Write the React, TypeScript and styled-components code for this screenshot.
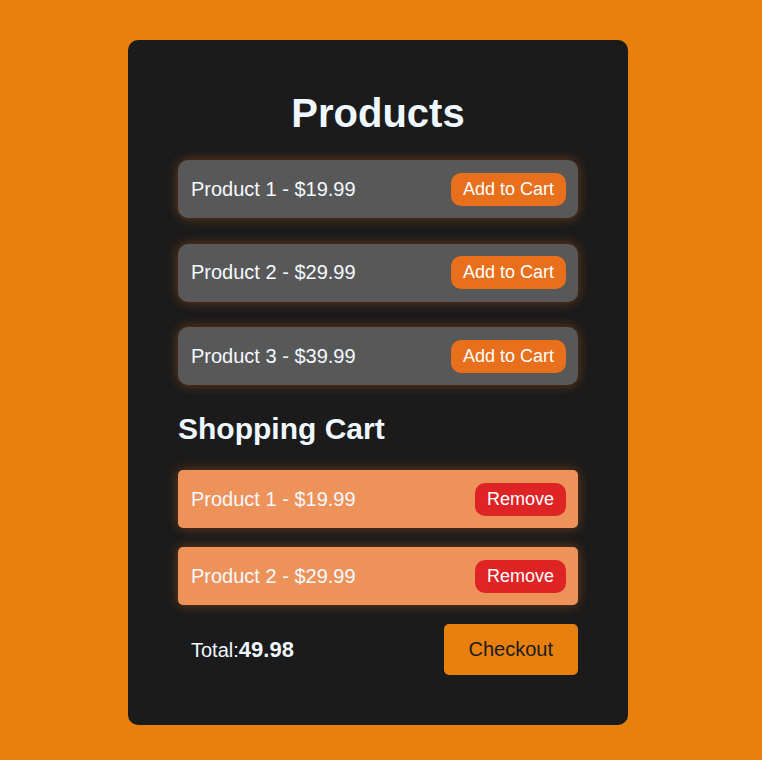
import React from "react";
import styled, { createGlobalStyle } from "styled-components";

const Global = createGlobalStyle`
  html, body { margin: 0; padding: 0; background: #e8800e; }
  body { font-family: "Liberation Sans", Arial, sans-serif; }
`;

const Page = styled.div`
  display: flex;
  justify-content: center;
  align-items: flex-start;
  padding: 40px 6px 35px 0;
  min-height: 760px;
  box-sizing: border-box;
`;

const Card = styled.div`
  width: 500px;
  box-sizing: border-box;
  background: #1b1b1b;
  border-radius: 10px;
  padding: 50px 50px 50px 50px;
  color: #f0f8ff;
`;

const Title = styled.h1`
  margin: 0 0 24px;
  text-align: center;
  font-size: 40px;
  line-height: 46px;
  font-weight: bold;
`;

const List = styled.div<{ $gap: number }>`
  display: flex;
  flex-direction: column;
  gap: ${(p) => p.$gap}px;
`;

const Row = styled.div<{ $variant: "product" | "cart" }>`
  display: flex;
  align-items: center;
  justify-content: space-between;
  height: 58px;
  box-sizing: border-box;
  padding: 0 12px 0 13px;
  border-radius: ${(p) => (p.$variant === "product" ? 10 : 5)}px;
  background: ${(p) => (p.$variant === "product" ? "#585858" : "#ed935a")};
  box-shadow: 0 0 12px rgba(232, 111, 28, 0.4);
  font-size: 20px;
`;

const Label = styled.span`
  color: #f5f8ff;
`;

const SmallButton = styled.button<{ $tone: "add" | "remove" }>`
  font-family: "Liberation Sans", Arial, sans-serif;
  font-size: 18px;
  line-height: 21px;
  padding: 6px 12px;
  border: none;
  border-radius: 10px;
  color: #fff;
  background: ${(p) => (p.$tone === "add" ? "#e86f1c" : "#df2426")};
  cursor: pointer;
`;

const Subtitle = styled.h2`
  margin: 26px 0 24px;
  font-size: 30px;
  line-height: 35px;
  font-weight: bold;
`;

const Footer = styled.div`
  display: flex;
  align-items: center;
  justify-content: space-between;
  margin-top: 19px;
  padding-left: 13px;
`;

const Total = styled.span`
  font-size: 20px;
  b {
    font-size: 22px;
  }
`;

const Checkout = styled.button`
  font-family: "Liberation Sans", Arial, sans-serif;
  font-size: 20px;
  line-height: 23px;
  padding: 14px 25px;
  border: none;
  border-radius: 5px;
  background: #e8800e;
  color: #1b1b1b;
  cursor: pointer;
`;

const products = [
  { name: "Product 1", price: 19.99 },
  { name: "Product 2", price: 29.99 },
  { name: "Product 3", price: 39.99 },
];

const cart = [products[0], products[1]];

export default function App() {
  const total = cart.reduce((s, p) => s + p.price, 0);
  return (
    <>
      <Global />
      <Page>
        <Card>
          <Title>Products</Title>
          <List $gap={25.5}>
            {products.map((p) => (
              <Row key={p.name} $variant="product">
                <Label>
                  {p.name} - ${p.price.toFixed(2)}
                </Label>
                <SmallButton $tone="add">Add to Cart</SmallButton>
              </Row>
            ))}
          </List>
          <Subtitle>Shopping Cart</Subtitle>
          <List $gap={19}>
            {cart.map((p) => (
              <Row key={p.name} $variant="cart">
                <Label>
                  {p.name} - ${p.price.toFixed(2)}
                </Label>
                <SmallButton $tone="remove">Remove</SmallButton>
              </Row>
            ))}
          </List>
          <Footer>
            <Total>
              Total:<b>{total.toFixed(2)}</b>
            </Total>
            <Checkout>Checkout</Checkout>
          </Footer>
        </Card>
      </Page>
    </>
  );
}
